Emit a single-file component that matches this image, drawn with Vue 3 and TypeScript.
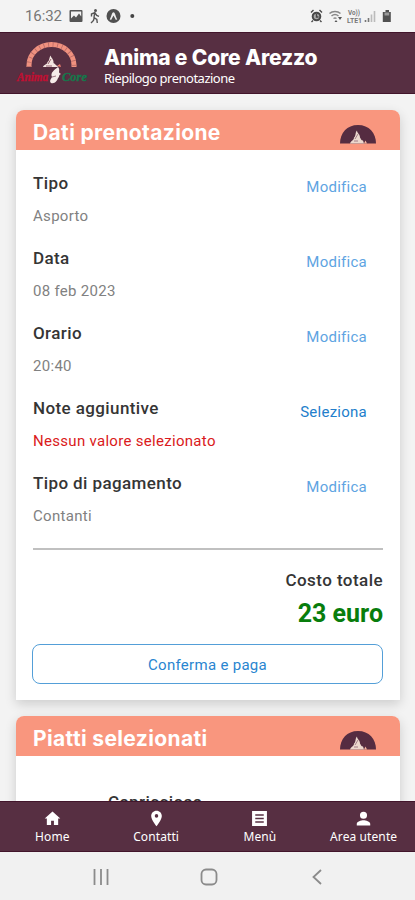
<script setup lang="ts">
interface Detail {
  label: string
  value: string
  action: string
  missing?: boolean
}

interface Tab {
  label: string
  icon: string
}

const details: Detail[] = [
  { label: 'Tipo', value: 'Asporto', action: 'Modifica' },
  { label: 'Data', value: '08 feb 2023', action: 'Modifica' },
  { label: 'Orario', value: '20:40', action: 'Modifica' },
  { label: 'Note aggiuntive', value: 'Nessun valore selezionato', action: 'Seleziona', missing: true },
  { label: 'Tipo di pagamento', value: 'Contanti', action: 'Modifica' },
]

const tabs: Tab[] = [
  { label: 'Home', icon: 'M10 21v-6h4v6h6v-9h3L12 2 1 12h3v9z' },
  {
    label: 'Contatti',
    icon: 'M12 1C7.600 1 4.500 4.300 4.500 8.500 4.500 14 12 23 12 23s7.500-9 7.500-14.500C19.500 4.300 16.400 1 12 1zm0 9.800a2.500 2.500 0 1 1 0-5 2.500 2.500 0 0 1 0 5z',
  },
  { label: 'Menù', icon: 'M1.500 1.500h21v21h-21zM6 6v2h12V6zM6 11v2h12v-2zM6 16v2h12v-2z' },
  {
    label: 'Area utente',
    icon: 'M12 12.500a5 5 0 1 0 0-10 5 5 0 0 0 0 10zm0 2c-3.300 0-9.500 1.700-9.500 5V22h19v-2.500c0-3.300-6.200-5-9.500-5z',
  },
]
</script>

<template>
  <div class="screen">
    <div class="status">
      <span class="clock">16:32</span>
      <svg class="s-left" viewBox="0 0 70 16">
        <path fill="#555" fill-rule="evenodd" d="M1.500 2h11a1 1 0 0 1 1 1v10a1 1 0 0 1-1 1h-11a1 1 0 0 1-1-1V3a1 1 0 0 1 1-1zM2 3.500v7l3-3 2 2 3-4 2.200 3v-5z" />
        <circle cx="26.500" cy="2.600" r="1.500" fill="#555" />
        <path fill="none" stroke="#555" stroke-width="1.400" d="M22.500 8.500V6l3.200-1.300L25 9.500l2.800 2 .5 3.500M25.300 9.500l-.8 3-2.500 2.500M26 5l1.700 2.500L30 8.300" />
        <circle cx="44.500" cy="8" r="7" fill="#505050" />
        <path d="M40.700 11.300c1.700-2 2-7 3.800-7s2.100 5 3.800 7l-1.400.6-2.400-4.400-2.400 4.400z" fill="#f0f0f0" />
        <circle cx="63.300" cy="8" r="2" fill="#444" />
      </svg>
      <svg class="s-right" viewBox="0 0 84 16">
        <circle cx="6.500" cy="8.500" r="3.800" fill="#aaa" stroke="#484848" stroke-width="2" />
        <path d="M1 4.500 3.500 2M9.500 2 12 4.500M3 12.500 1.500 14M10 12.500l1.500 1.500M6.500 6v3h2" fill="none" stroke="#484848" stroke-width="1.400" />
        <path d="M19.500 5.500c3-2.800 8-2.800 11 0M21.500 8c2-1.700 5-1.700 7 0M23.500 10.500q1.500-1 3 0" fill="none" stroke="#888" stroke-width="1.500" />
        <path d="m28 9 2 3 2-3zM26 12l-1.500 2h3z" fill="#555" />
        <text x="38" y="7" textLength="12" lengthAdjust="spacingAndGlyphs">Vo))</text>
        <text x="37" y="14.500" textLength="15" lengthAdjust="spacingAndGlyphs">LTE1</text>
        <path d="M55.500 14v-2M58.500 14v-4" stroke="#777" stroke-width="1.600" />
        <path d="M61.500 14V6.500M64.500 14V3" stroke="#bbb" stroke-width="1.600" />
        <path d="M75.500 2h3.500v2h1.800v10h-8V4h2.700z" fill="#505050" />
        <path d="M74.500 4.500h4.700v3h-4.700z" fill="#999" />
      </svg>
    </div>

    <header class="bar">
      <svg class="logo" viewBox="0 0 74 46">
        <path d="M14 26v-2a22.500 20.500 0 0 1 45 0v2" fill="none" stroke="#f0917f" stroke-width="5" />
        <path d="M14 26v-2a22.500 20.500 0 0 1 45 0v2" fill="none" stroke="#b86966" stroke-width="5" stroke-dasharray=".8 3.800" />
        <path d="M28 26c1-3 4-2 4.500-5 2-1 1.500-4 3-6.500 1 3 3.500 4 3 7.500 2 1 2 2 5 4z" fill="#f3e6e1" />
        <path d="m33 23 3-5M31 25h6" stroke="#96616e" stroke-width="1" />
        <path d="M42 25l3-2 1 3z" fill="#ef806f" />
        <text class="logo-red" x="2" y="40" textLength="31" lengthAdjust="spacingAndGlyphs">Anima</text>
        <text class="logo-green" x="47" y="40" textLength="25" lengthAdjust="spacingAndGlyphs">Core</text>
        <path d="M43 26c3 4-1 5 3 7-3 1-1 3-3 4-1 3-3 6-7 5-2-2 0-4 1-6-2-4 2-7 6-10z" fill="#f6ece9" />
        <path d="m37 36 4-1" stroke="#8a5b6b" stroke-width=".8" />
      </svg>
      <div class="titles">
        <h1>Anima e Core Arezzo</h1>
        <p>Riepilogo prenotazione</p>
      </div>
    </header>

    <main class="content">
      <section class="card">
        <div class="card-head">
          <h2>Dati prenotazione</h2>
          <svg class="oven" viewBox="0 0 36 19">
            <path d="M0 18.500C0 8 7 0 18 0s18 8 18 18.500z" fill="#552c41" />
            <path d="M10 18.500c1-3 4-3 4-6 2-1 1-5 3-7 0 3 3 3 3 7 1 1 1 3 3 3l1 3z" fill="#ecd8ce" />
            <path d="m15 14 3-5M14 16h4" stroke="#9b7480" stroke-width=".9" />
            <path d="m24 18.500 1.500-3 1.500 3z" fill="#f6b5a0" />
          </svg>
        </div>
        <div class="card-body">
          <div v-for="item in details" :key="item.label" class="row">
            <div class="texts">
              <div class="label">{{ item.label }}</div>
              <div class="value" :class="{ missing: item.missing }">{{ item.value }}</div>
            </div>
            <a class="action" :class="{ strong: item.missing }">{{ item.action }}</a>
          </div>
          <div class="total">
            <div class="total-label">Costo totale</div>
            <div class="total-value">23 euro</div>
          </div>
          <button class="pay">Conferma e paga</button>
        </div>
      </section>

      <section class="card second">
        <div class="card-head">
          <h2>Piatti selezionati</h2>
          <svg class="oven" viewBox="0 0 36 19">
            <path d="M0 18.500C0 8 7 0 18 0s18 8 18 18.500z" fill="#552c41" />
            <path d="M10 18.500c1-3 4-3 4-6 2-1 1-5 3-7 0 3 3 3 3 7 1 1 1 3 3 3l1 3z" fill="#ecd8ce" />
            <path d="m15 14 3-5M14 16h4" stroke="#9b7480" stroke-width=".9" />
            <path d="m24 18.500 1.500-3 1.500 3z" fill="#f6b5a0" />
          </svg>
        </div>
        <div class="dish">Capricciosa</div>
      </section>
    </main>

    <nav class="tabs">
      <a v-for="tab in tabs" :key="tab.label" class="tab">
        <svg viewBox="0 0 24 24"><path :d="tab.icon" fill="#fff" fill-rule="evenodd" /></svg>
        <span>{{ tab.label }}</span>
      </a>
    </nav>

    <div class="system">
      <svg viewBox="0 0 18 18"><path d="M2.500 1v16M9 1v16M15.500 1v16" /></svg>
      <svg viewBox="0 0 18 18"><rect x="1.500" y="1.500" width="15" height="15" rx="4.500" /></svg>
      <svg viewBox="0 0 18 18"><path d="M13 2 5.500 9l7.500 7" /></svg>
    </div>
  </div>
</template>

<style>
body {
  margin: 0;
  background: #f3f3f3;
}
</style>

<style scoped>
.screen {
  width: 415px;
  height: 900px;
  display: flex;
  flex-direction: column;
  overflow: hidden;
  background: #f3f3f3;
  font-family: Roboto, 'Liberation Sans', sans-serif;
  color: #353535;
}

h1,
h2,
p {
  margin: 0;
  white-space: nowrap;
}

.status {
  flex: 0 0 32px;
  display: flex;
  align-items: center;
  padding: 0 25px;
  box-sizing: border-box;
}

.clock {
  width: 44px;
  font-size: 15px;
  letter-spacing: -0.1px;
  line-height: 31px;
  padding-top: 1px;
  color: #777;
}

.s-left {
  width: 70px;
  height: 16px;
}

.s-right {
  width: 84px;
  height: 16px;
  margin-left: auto;
  margin-right: -4px;
}

.s-right text {
  font: 700 8px Roboto, sans-serif;
  fill: #777;
}

.bar {
  flex: 0 0 62px;
  display: flex;
  box-sizing: border-box;
  border-top: 1px solid #42152b;
  border-bottom: 1px solid #42152b;
  padding-left: 15px;
  background: #572f42;
  color: #fff;
}

.logo {
  width: 74px;
  height: 46px;
  margin: 8px 15px 0 0;
}

.logo text {
  font: italic 700 13px 'Liberation Serif', serif;
  stroke-width: 0.4;
}

.logo-red {
  fill: #c01032;
  stroke: #c01032;
}

.logo-green {
  fill: #16774b;
  stroke: #16774b;
}

h1 {
  font: 800 21px/26px Inter, sans-serif;
  letter-spacing: -0.17px;
  padding-top: 12px;
}

.titles p {
  margin-top: -1px;
  font: 400 13px/16px 'Noto Sans', sans-serif;
  letter-spacing: -0.5px;
}

.content {
  flex: 1;
  min-height: 0;
  overflow: hidden;
  padding: 16px 15px 0 16px;
}

.card {
  height: 590px;
  background: #fff;
  border-radius: 8px 8px 0 0;
  box-shadow: 0 4px 12px rgba(0, 0, 0, 0.16);
}

.second {
  margin-top: 16px;
}

.card-head {
  height: 40px;
  display: flex;
  align-items: center;
  justify-content: space-between;
  padding: 0 24px 0 17px;
  border-radius: 8px 8px 0 0;
  background: #f9967e;
  color: #fff;
}

h2 {
  font: 700 21px/40px Inter, sans-serif;
  letter-spacing: 0.36px;
  padding-top: 5px;
}

.oven {
  width: 36px;
  height: 19px;
  margin-top: 8px;
}

.card-body {
  padding: 22px 17px 0;
}

.row {
  height: 75px;
  display: flex;
  justify-content: space-between;
}

.label {
  font-size: 17px;
  font-weight: 500;
  line-height: 22px;
  letter-spacing: 0.4px;
}

.value {
  margin-top: 11px;
  font-size: 15px;
  line-height: 22px;
  letter-spacing: 0.3px;
  color: #818181;
}

.value.missing {
  color: #da1a20;
}

.action {
  margin-right: 16px;
  padding-top: 4px;
  font-size: 15px;
  line-height: 22px;
  letter-spacing: 0.25px;
  color: #5ea4e2;
}

.action.strong {
  color: #227ecb;
}

.total {
  border-top: 2px solid #c0c0c0;
  margin-top: 1px;
  padding-top: 18px;
  text-align: right;
}

.total-label {
  font-size: 17px;
  font-weight: 500;
  line-height: 24px;
  letter-spacing: 0.45px;
}

.total-value {
  margin-top: 7px;
  font-size: 25px;
  font-weight: 700;
  line-height: 30px;
  color: #087d0c;
}

.pay {
  display: block;
  width: 351px;
  height: 40px;
  margin: 15px 0 0 -1px;
  padding: 1px 0 0;
  border: 1px solid #549fd8;
  border-radius: 8px;
  background: #fff;
  font: 400 15px Roboto, sans-serif;
  letter-spacing: 0.3px;
  color: #2985d0;
}

.dish {
  padding: 34px 0 0 92px;
  font-size: 17px;
  font-weight: 500;
  line-height: 24px;
  letter-spacing: 0.4px;
}

.tabs {
  flex: 0 0 51px;
  display: grid;
  grid-template-columns: repeat(4, 103.75px);
  box-sizing: border-box;
  border-top: 1px solid #42152b;
  border-bottom: 1px solid #42152b;
  background: #572f42;
  color: #fff;
}

.tab {
  display: flex;
  flex-direction: column;
  align-items: center;
  padding: 8px 0 0 1px;
}

.tab svg {
  width: 17px;
  height: 17px;
}

.tab span {
  margin-top: 2px;
  font: 400 12px/16px 'Noto Sans', sans-serif;
  letter-spacing: 0.1px;
  white-space: nowrap;
}

.system {
  flex: 0 0 48px;
  display: grid;
  grid-template-columns: repeat(3, 108px);
  justify-content: center;
  align-items: center;
  justify-items: center;
  padding: 1px 0 0 2px;
  box-sizing: border-box;
  background: #f1f1f1;
}

.system svg {
  width: 18px;
  height: 18px;
  fill: none;
  stroke: #8b8b8b;
  stroke-width: 1.8;
}
</style>
